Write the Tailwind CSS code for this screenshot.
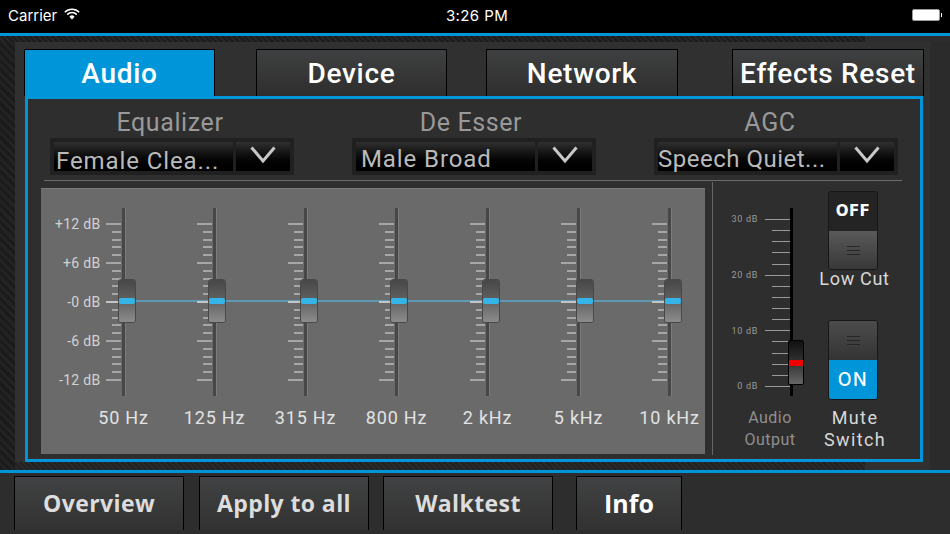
<!DOCTYPE html>
<html lang="en">
<head>
  <meta charset="UTF-8" />
  <title>Audio settings</title>
  <script src="https://cdn.jsdelivr.net/npm/@tailwindcss/browser@4"></script>
</head>
<body class="bg-black font-['Roboto',sans-serif]">
  <div class="w-[950px] h-[534px] overflow-hidden flex flex-col bg-[#2d2d2d]">

    <!-- status bar -->
    <div class="h-[33px] shrink-0 bg-black text-white flex items-center px-2 relative font-['Inter',sans-serif] text-[15px]">
      <span>Carrier</span>
      <svg class="ml-[7px] mb-[6px]" width="16" height="12" viewBox="0 0 16 12">
        <path d="M0.8 4.2A10.2 10.2 0 0 1 15.2 4.2" fill="none" stroke="#fff" stroke-width="1.5"/>
        <path d="M3.2 6.6A6.8 6.8 0 0 1 12.8 6.6" fill="none" stroke="#fff" stroke-width="1.5"/>
        <path d="M5.4 8.7A3.6 3.6 0 0 1 10.6 8.7L8 11.4Z" fill="#fff"/>
      </svg>
      <span class="absolute left-0 right-0 text-center pl-[4px] tracking-[0.4px] pointer-events-none">3:26 PM</span>
      <div class="ml-auto mb-[3px] flex items-center">
        <div class="w-[28px] h-[12px] bg-white rounded-[2px] border border-[#999999]"></div>
        <div class="w-[1px] h-[4px] bg-white ml-[1px]"></div>
      </div>
    </div>
    <div class="h-[3px] shrink-0 bg-[#0095d9]"></div>

    <!-- top strip -->
    <div class="h-[6px] shrink-0 flex">
      <div class="w-[865px] bg-[#1e1e1e] bg-[repeating-linear-gradient(45deg,#1c1c1c_0px,#1c1c1c_2px,#262626_2px,#262626_4px)]"></div>
      <div class="flex-1 bg-[#2d2d2d]"></div>
    </div>

    <!-- middle -->
    <div class="h-[428px] shrink-0 flex">
      <div class="w-[15px] bg-[#1e1e1e] bg-[repeating-linear-gradient(45deg,#1b1b1b_0px,#1b1b1b_3px,#232323_3px,#232323_6px)]"></div>
      <div class="w-[915px] bg-[#303030] pt-[7px] flex flex-col">

        <!-- tabs -->
        <div class="h-[47px] shrink-0 flex pl-[9px] text-[28px] font-medium tracking-[0.7px] text-white">
          <div class="w-[191px] pt-[2px] bg-[#0095d9] border-x border-t border-black flex items-center justify-center">Audio</div>
          <div class="ml-[41px] w-[191px] pt-[2px] bg-gradient-to-b from-[#3f4041] to-[#2e2e2e] border-x border-t border-black flex items-center justify-center">Device</div>
          <div class="ml-[39px] w-[192px] pt-[2px] bg-gradient-to-b from-[#3f4041] to-[#2e2e2e] border-x border-t border-black flex items-center justify-center">Network</div>
          <div class="ml-[54px] w-[192px] pt-[2px] bg-gradient-to-b from-[#3f4041] to-[#2e2e2e] border-x border-t border-black flex items-center justify-center whitespace-nowrap">Effects Reset</div>
        </div>

        <!-- blue panel -->
        <div class="ml-[10px] w-[898px] h-[366px] shrink-0 border-[3px] border-[#0095d9] bg-[#2e2e2e] flex flex-col">

          <!-- dropdown row -->
          <div class="flex pl-[22px] gap-[58px] pt-[8px]">
            <div class="w-[244px]">
              <div class="h-[30px] pt-[1px] pr-[4px] text-center text-[25px] leading-[30px] text-[#999999] tracking-[0.6px]">Equalizer</div>
              <div class="mt-[1px] h-[37px] bg-[#202020] p-[4px] flex gap-[3px]">
                <div class="w-[179px] bg-gradient-to-b from-[#303030] to-black text-[24px] leading-[24px] pt-[7px] pl-[2px] text-[#bababa] tracking-[0.9px] whitespace-nowrap">Female Clea...</div>
                <div class="flex-1 bg-gradient-to-b from-[#303030] to-black flex justify-center pt-[4px]">
                  <svg width="26" height="17" viewBox="0 0 26 17"><path d="M1.5 1.5L13 15L24.5 1.5" fill="none" stroke="#c8c8c8" stroke-width="3"/></svg>
                </div>
              </div>
            </div>
            <div class="w-[244px]">
              <div class="h-[30px] pt-[1px] pr-[6px] text-center text-[25px] leading-[30px] text-[#999999] tracking-[0.6px]">De Esser</div>
              <div class="mt-[1px] h-[37px] bg-[#202020] p-[4px] flex gap-[3px]">
                <div class="w-[179px] bg-gradient-to-b from-[#303030] to-black text-[24px] leading-[24px] pt-[5px] pl-[5px] text-[#bababa] tracking-[0.9px] whitespace-nowrap">Male Broad</div>
                <div class="flex-1 bg-gradient-to-b from-[#303030] to-black flex justify-center pt-[4px]">
                  <svg width="26" height="17" viewBox="0 0 26 17"><path d="M1.5 1.5L13 15L24.5 1.5" fill="none" stroke="#c8c8c8" stroke-width="3"/></svg>
                </div>
              </div>
            </div>
            <div class="w-[244px]">
              <div class="h-[30px] pt-[1px] pr-[12px] text-center text-[25px] leading-[30px] text-[#999999] tracking-[0.6px]">AGC</div>
              <div class="mt-[1px] h-[37px] bg-[#202020] p-[4px] flex gap-[3px]">
                <div class="w-[179px] bg-gradient-to-b from-[#303030] to-black text-[24px] leading-[24px] pt-[5px] text-[#bababa] tracking-[0.5px] whitespace-nowrap">Speech Quiet...</div>
                <div class="flex-1 bg-gradient-to-b from-[#303030] to-black flex justify-center pt-[4px]">
                  <svg width="26" height="17" viewBox="0 0 26 17"><path d="M1.5 1.5L13 15L24.5 1.5" fill="none" stroke="#c8c8c8" stroke-width="3"/></svg>
                </div>
              </div>
            </div>
          </div>
          <div class="ml-[16px] w-[858px] h-[1px] mt-[5px] bg-[#6b6b6b] shrink-0"></div>

          <!-- lower row -->
          <div class="h-[273px] mt-[1px] shrink-0 flex pl-[13px]">
            <div id="eq" class="relative mt-[6px] w-[664px] h-[266px] bg-[#6a6a6a] border-t border-[#7a7a7a] pl-[37px] pt-[19px] flex">
              <div class="absolute left-[85px] w-[546px] top-[111px] h-[2px] bg-[#5f98b4]"></div>
            </div>
            <div class="ml-[7px] w-[1px] h-[273px] bg-[#666666]"></div>

            <!-- output slider -->
            <div class="w-[113px] relative">
              <div class="absolute left-[77px] top-[26px] w-[3px] h-[188px] bg-black"></div>
              <div id="outTicks" class="absolute left-[52px] top-[37px] w-[25px] h-[168px] flex flex-col justify-between items-end"></div>
              <div class="absolute left-[75px] top-[158px] w-[16px] h-[45px] rounded-[2px] border border-black overflow-hidden bg-gradient-to-b from-[#111111] via-[#333333] to-[#666666]">
                <div class="mt-[19px] h-[6px] bg-[#f00000]"></div>
              </div>
              <div class="absolute right-[68px] top-[32px] text-[9px] leading-[10px] tracking-[0.7px] text-[#9a9a9a] whitespace-nowrap">30 dB</div>
              <div class="absolute right-[68px] top-[88px] text-[9px] leading-[10px] tracking-[0.7px] text-[#9a9a9a] whitespace-nowrap">20 dB</div>
              <div class="absolute right-[68px] top-[144px] text-[9px] leading-[10px] tracking-[0.7px] text-[#9a9a9a] whitespace-nowrap">10 dB</div>
              <div class="absolute right-[68px] top-[199px] text-[9px] leading-[10px] tracking-[0.7px] text-[#9a9a9a] whitespace-nowrap">0 dB</div>
              <div class="absolute left-0 w-[114px] top-[225px] text-center text-[16px] leading-[22px] text-[#8f8f8f] tracking-[0.5px]">Audio<br />Output</div>
            </div>

            <!-- switches -->
            <div class="w-[54px] flex flex-col items-center">
              <div class="mt-[9px] w-[50px] h-[79px] rounded-[3px] border border-[#171717] overflow-hidden flex flex-col">
                <div class="h-[39px] bg-[#242424] flex items-center justify-center text-white text-[15px] font-bold tracking-[0.5px] font-['DejaVu_Sans',sans-serif]">OFF</div>
                <div class="flex-1 bg-gradient-to-b from-[#5a5a5a] to-[#383838] flex flex-col items-center justify-center gap-[3px]">
                  <div class="w-[13px] h-[1px] bg-[#262626]"></div>
                  <div class="w-[13px] h-[1px] bg-[#262626]"></div>
                  <div class="w-[13px] h-[1px] bg-[#262626]"></div>
                </div>
              </div>
              <div class="mt-[-2px] h-[22px] pl-[3px] whitespace-nowrap text-[18px] leading-[22px] text-[#d8d8d8] tracking-[0.7px]">Low Cut</div>
              <div class="mt-[30px] w-[50px] h-[80px] rounded-[3px] border border-[#171717] overflow-hidden flex flex-col">
                <div class="h-[39px] bg-gradient-to-b from-[#4c4c4c] to-[#343434] flex flex-col items-center justify-center gap-[3px]">
                  <div class="w-[13px] h-[1px] bg-[#262626]"></div>
                  <div class="w-[13px] h-[1px] bg-[#262626]"></div>
                  <div class="w-[13px] h-[1px] bg-[#262626]"></div>
                </div>
                <div class="flex-1 bg-[#0095d9] flex items-center justify-center text-white text-[18px] font-medium tracking-[1.5px] font-['Inter',sans-serif]">ON</div>
              </div>
              <div class="mt-[7px] pl-[4px] whitespace-nowrap text-center text-[18px] leading-[22px] text-[#d8d8d8] tracking-[1.4px]">Mute<br />Switch</div>
            </div>
          </div>
        </div>

        <!-- strip under the panel -->
        <div class="flex-1 w-[850px] bg-[repeating-linear-gradient(45deg,#222222_0px,#222222_2px,#2a2a2a_2px,#2a2a2a_4px)]"></div>
      </div>
      <div class="flex-1 bg-[#2b2b2b]"></div>
    </div>

    <div class="h-[3px] shrink-0 bg-[#0095d9]"></div>

    <!-- bottom buttons -->
    <div class="flex-1 pl-[14px] pt-[3px] flex bg-[#2d2d2d] text-[23px] font-bold font-['Open_Sans',sans-serif] text-[#dddddd]">
      <div class="w-[170px] h-[54px] bg-gradient-to-b from-[#414243] to-[#323232] border-x border-t border-black flex items-center justify-center tracking-[0.4px]">Overview</div>
      <div class="ml-[15px] w-[170px] h-[54px] bg-gradient-to-b from-[#414243] to-[#323232] border-x border-t border-black flex items-center justify-center tracking-[0.4px]">Apply to all</div>
      <div class="ml-[14px] w-[170px] h-[54px] bg-gradient-to-b from-[#414243] to-[#323232] border-x border-t border-black flex items-center justify-center tracking-[0.4px]">Walktest</div>
      <div class="ml-[23px] w-[106px] h-[54px] bg-gradient-to-b from-[#414243] to-[#323232] border-x border-t border-black flex items-center justify-center text-white text-[25px]">Info</div>
    </div>
  </div>

  <script>
    const bands = [
      { label: "50 Hz", shift: 3, db: true },
      { label: "125 Hz", shift: 2 },
      { label: "315 Hz", shift: 3 },
      { label: "800 Hz", shift: 2 },
      { label: "2 kHz", shift: 3 },
      { label: "5 kHz", shift: 6 },
      { label: "10 kHz", shift: 3 }
    ];
    const dbLabels = { 0: "+12 dB", 5: "+6 dB", 10: "-0 dB", 15: "-6 dB", 20: "-12 dB" };

    function eqTicks(withDb) {
      let html = "";
      for (let i = 0; i <= 20; i++) {
        if (i % 5 == 0) {
          const color = i == 10 ? "bg-[#c4c4c4]" : "bg-[#a6a6a6]";
          const text = withDb ? `<span class="absolute right-[20px] top-[-9px] text-[14px] leading-[20px] text-[#d2d2d2] whitespace-nowrap tracking-[0.3px]">${dbLabels[i]}</span>` : "";
          html += `<div class="relative w-[15px] h-[2px] ${color}">${text}</div>`;
        } else {
          html += `<div class="w-[9px] h-[2px] bg-[#a6a6a6]"></div>`;
        }
      }
      return html;
    }

    document.getElementById("eq").insertAdjacentHTML("beforeend", bands.map(b => `
      <div class="w-[91px] shrink-0 flex flex-col items-center">
        <div class="relative w-[4px] h-[188px] bg-[#474747] border-r border-[#7c7c7c]">
          <div class="absolute right-full mr-[1px] top-[15px] h-[158px] flex flex-col justify-between items-end">${eqTicks(b.db)}</div>
          <div class="absolute top-[71px] w-[18px] h-[44px] rounded-[3px] border border-[#484848] overflow-hidden flex flex-col" style="left:${b.shift - 7}px">
            <div class="h-[18px] bg-gradient-to-b from-[#474747] to-[#5e5e5e]"></div>
            <div class="h-[6px] rounded-[2px] bg-[#35b4e8]"></div>
            <div class="flex-1 bg-gradient-to-b from-[#686868] to-[#8c8c8c]"></div>
          </div>
        </div>
        <div class="mt-[10px] text-[18px] leading-[24px] text-[#e2e2e2] tracking-[0.8px] whitespace-nowrap">${b.label}</div>
      </div>`).join(""));

    let out = "";
    for (let i = 0; i <= 15; i++) {
      out += i % 5 == 0
        ? `<div class="w-[25px] h-[1px] bg-[#9a9a9a]"></div>`
        : `<div class="w-[18px] h-[1px] bg-[#9a9a9a]"></div>`;
    }
    document.getElementById("outTicks").innerHTML = out;
  </script>
</body>
</html>
